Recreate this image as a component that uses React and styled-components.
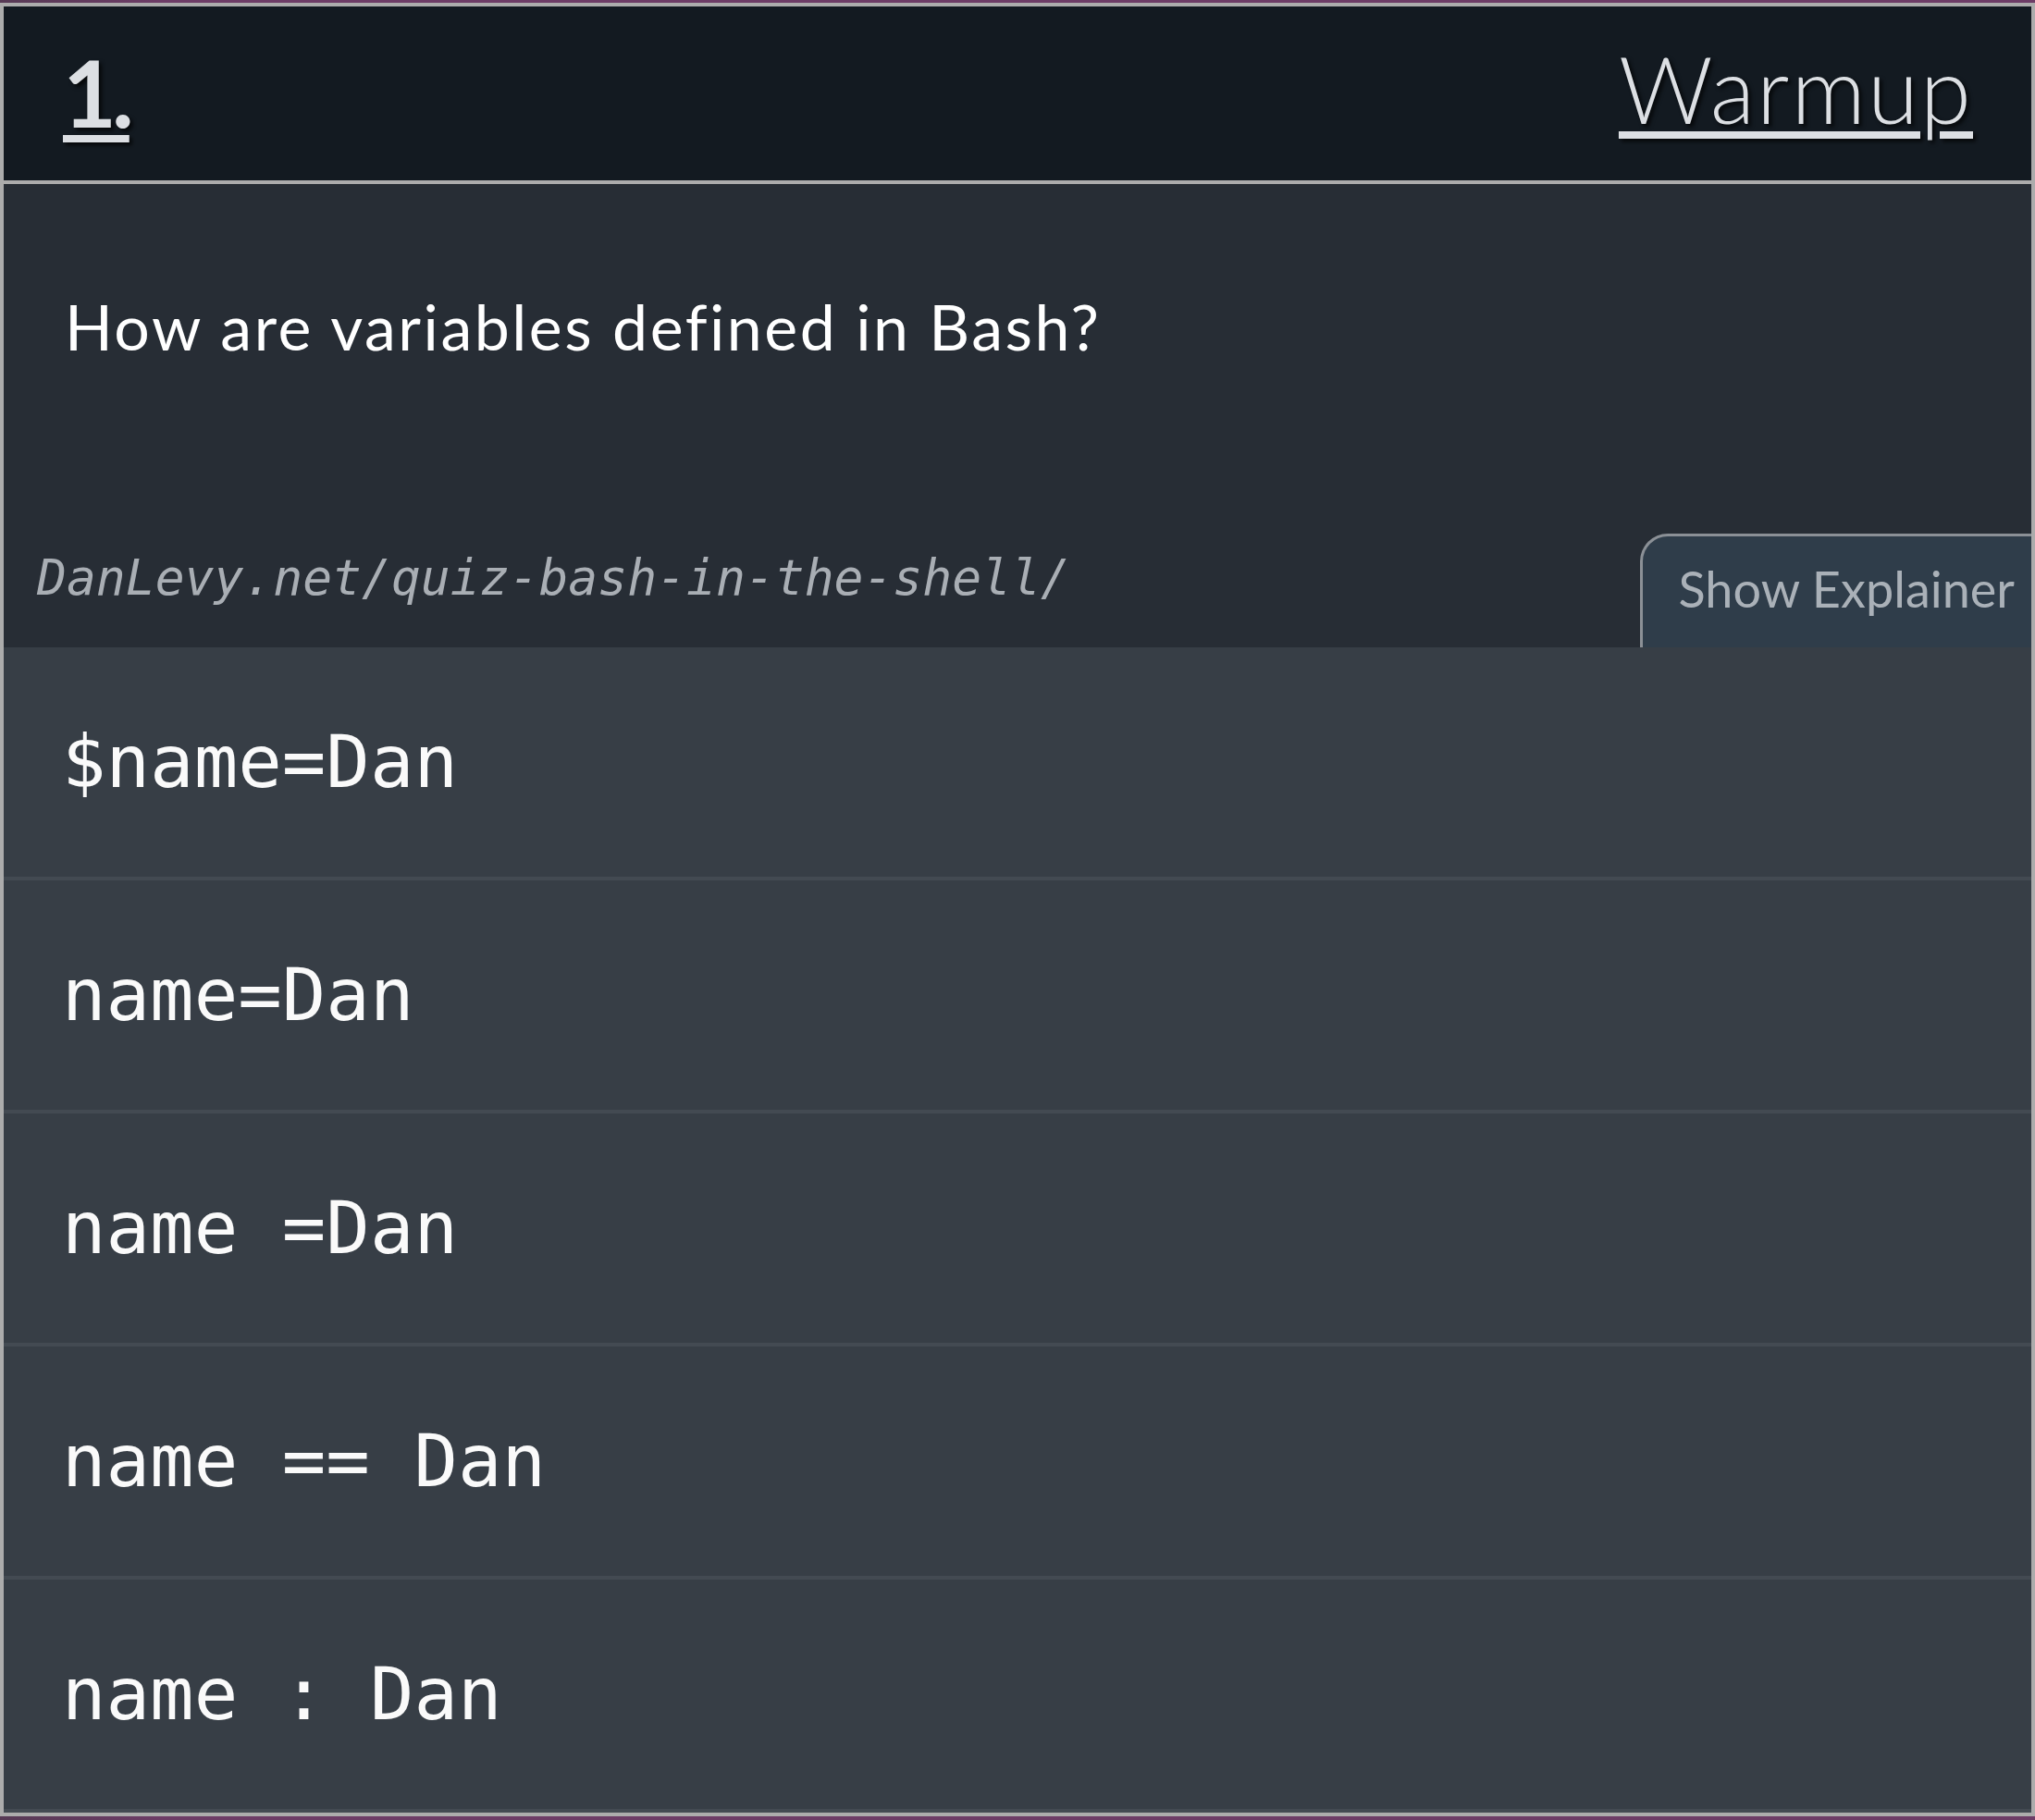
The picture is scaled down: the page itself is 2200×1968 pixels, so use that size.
import styled, { createGlobalStyle } from "styled-components";

const GlobalStyle = createGlobalStyle`
  html, body {
    margin: 0;
    padding: 0;
  }
  body {
    background: linear-gradient(90deg, #573a55 0%, #6d3c66 8%, #6d3c66 100%);
    padding: 3px 0 4px;
  }
`;

const Card = styled.div`
  border: 4px solid #acacac;
  background: #272d35;
  overflow: hidden;
`;

const Header = styled.div`
  display: flex;
  justify-content: space-between;
  align-items: center;
  height: 192px;
  padding: 0 63px 0 64px;
  background: #131a21;
  border-bottom: 4px solid #acacac;
  box-sizing: border-box;
`;

const Title = styled.a`
  font-family: "Lato", "Liberation Sans", sans-serif;
  font-size: 100px;
  font-weight: ${({ $bold }) => ($bold ? 700 : 300)};
  letter-spacing: ${({ $bold }) => ($bold ? "-5px" : "2px")};
  color: #dcdfe3;
  text-decoration: underline;
  text-decoration-thickness: 8px;
  text-underline-offset: 8px;
  text-shadow: 3px 3px 4px rgba(0, 0, 0, 0.75);
  line-height: 1;
  margin-top: ${({ $bold }) => ($bold ? "-4px" : "-12px")};
`;

const Prompt = styled.div`
  display: flex;
  flex-direction: column;
`;

const Question = styled.div`
  font-family: "Lato", "Liberation Sans", sans-serif;
  font-size: 68px;
  line-height: 82px;
  color: #ffffff;
  padding: 113px 0 0 66px;
  margin-bottom: 183px;
  letter-spacing: 2.5px;
`;

const Footer = styled.div`
  display: flex;
  justify-content: space-between;
  align-items: flex-end;
  height: 123px;
`;

const Link = styled.div`
  font-family: "DejaVu Sans Mono", "Liberation Mono", monospace;
  font-style: italic;
  font-size: 53px;
  line-height: 64px;
  color: #a9aeb4;
  padding-left: 36px;
  margin-bottom: 43px;
`;

const ExplainerButton = styled.button`
  align-self: stretch;
  font-family: "Lato", "Liberation Sans", sans-serif;
  font-size: 54px;
  line-height: 65px;
  color: #aab1b8;
  background: #2f3d4a;
  border: 3px solid #8b9096;
  border-right: none;
  border-bottom: none;
  border-top-left-radius: 30px;
  padding: 24px 18px 31px 38px;
  cursor: pointer;
  display: flex;
  align-items: flex-start;
`;

const Answers = styled.div`
  display: flex;
  flex-direction: column;
  background: #373e46;
`;

const Answer = styled.div`
  display: flex;
  align-items: center;
  height: 248px;
  padding-left: 63px;
  border-bottom: 4px solid #434a52;
  font-family: "DejaVu Sans Mono", "Liberation Mono", monospace;
  font-size: 79px;
  color: #fafafa;
  white-space: pre;
`;

const answers = [
  "$name=Dan",
  "name=Dan",
  "name =Dan",
  "name == Dan",
  "name : Dan",
];

export default function App() {
  return (
    <>
      <GlobalStyle />
      <Card>
        <Header>
          <Title $bold>1.</Title>
          <Title>Warmup</Title>
        </Header>
        <Prompt>
          <Question>How are variables defined in Bash?</Question>
          <Footer>
            <Link>DanLevy.net/quiz-bash-in-the-shell/</Link>
            <ExplainerButton>Show Explainer</ExplainerButton>
          </Footer>
        </Prompt>
        <Answers>
          {answers.map((a) => (
            <Answer key={a}>{a}</Answer>
          ))}
        </Answers>
      </Card>
    </>
  );
}
